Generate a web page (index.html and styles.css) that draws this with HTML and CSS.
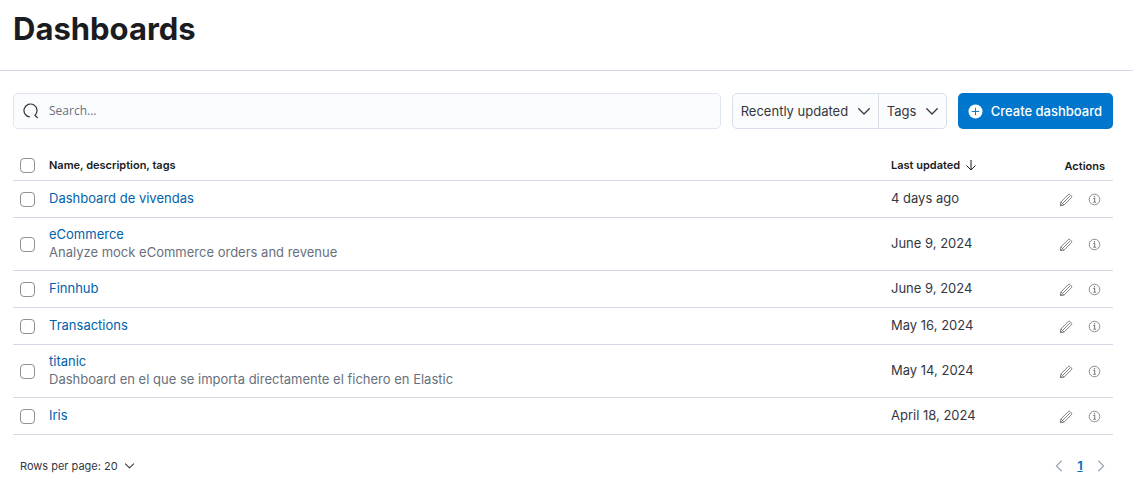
FILE: index.html
```html
<!DOCTYPE html>
<html lang="en">
<head>
<meta charset="utf-8">
<meta name="viewport" content="width=device-width, initial-scale=1">
<title>Dashboards</title>
<link rel="stylesheet" href="styles.css">
</head>
<body>
<svg class="sprite" aria-hidden="true">
  <symbol id="chevron" viewBox="0 0 16 16"><path d="M2 5.500 8 11.500l6-6" fill="none" stroke="currentColor" stroke-width="1.500" stroke-linecap="round" stroke-linejoin="round"/></symbol>
  <symbol id="pencil" viewBox="0 0 16 16"><path d="M1.600 14.400 2.200 10.200 10.600 1.800a1.400 1.400 0 0 1 2 0l1.600 1.600a1.400 1.400 0 0 1 0 2L5.800 13.800zM2.200 10.200l3.600 3.600M4 12l8.800-8.800" fill="none" stroke="currentColor" stroke-width="1.100"/><path d="M1.200 14.800 1.700 11.600l2.700 2.700z" fill="currentColor"/></symbol>
  <symbol id="info" viewBox="0 0 16 16"><circle cx="8" cy="8" r="6.500" fill="none" stroke="currentColor" stroke-width="1.100"/><path d="M6.500 6.800h1.700v4.500M6.500 11.400h3.300" fill="none" stroke="currentColor" stroke-width="1.300"/><circle cx="8" cy="4.600" r="1" fill="currentColor"/></symbol>
</svg>

<header class="page-header">
  <h1 class="page-title">Dashboards</h1>
</header>

<main class="content">
  <div class="toolbar">
    <label class="search">
      <svg class="search-icon" viewBox="0 0 16 16" aria-hidden="true"><path d="M7 14A6.500 6.500 0 1 1 12 12.200L14.700 15" fill="none" stroke="currentColor" stroke-width="1.200"/></svg>
      <input class="search-input" type="search" placeholder="Search..." aria-label="Search dashboards">
    </label>
    <div class="filters">
      <div class="picker">
        <select class="picker-select" aria-label="Sort by"><option>Recently updated</option></select>
        <svg class="picker-icon" aria-hidden="true"><use href="#chevron"/></svg>
      </div>
      <div class="picker">
        <select class="picker-select" aria-label="Filter by tags"><option>Tags</option></select>
        <svg class="picker-icon" aria-hidden="true"><use href="#chevron"/></svg>
      </div>
    </div>
    <button class="create" type="button">
      <svg class="create-icon" viewBox="0 0 16 16" aria-hidden="true"><circle cx="8" cy="8" r="7.500" fill="currentColor"/><path class="create-plus" d="M8 4v8M4 8h8"/></svg>
      Create dashboard
    </button>
  </div>

  <table class="table">
    <thead>
      <tr>
        <th class="cell-check"><input class="check" type="checkbox" aria-label="Select all rows"></th>
        <th class="cell-name" scope="col">Name, description, tags</th>
        <th class="cell-date" scope="col" aria-sort="descending"><button class="sort" type="button">Last updated <svg class="sort-icon" viewBox="0 0 12 12" aria-hidden="true"><path d="M6 1v10M1.500 6.500 6 11l4.500-4.500" fill="none" stroke="currentColor"/></svg></button></th>
        <th class="cell-actions" scope="col">Actions</th>
      </tr>
    </thead>
    <tbody>
      <tr>
        <td class="cell-check"><input class="check" type="checkbox" aria-label="Select Dashboard de vivendas"></td>
        <td class="cell-name"><a class="link" href="#vivendas">Dashboard de vivendas</a></td>
        <td class="cell-date">4 days ago</td>
        <td class="cell-actions"><div class="actions"><button class="action" type="button" aria-label="Edit"><svg class="action-icon"><use href="#pencil"/></svg></button><button class="action" type="button" aria-label="View details"><svg class="action-icon info"><use href="#info"/></svg></button></div></td>
      </tr>
      <tr>
        <td class="cell-check"><input class="check" type="checkbox" aria-label="Select eCommerce"></td>
        <td class="cell-name"><a class="link" href="#ecommerce">eCommerce</a><p class="description">Analyze mock eCommerce orders and revenue</p></td>
        <td class="cell-date">June 9, 2024</td>
        <td class="cell-actions"><div class="actions"><button class="action" type="button" aria-label="Edit"><svg class="action-icon"><use href="#pencil"/></svg></button><button class="action" type="button" aria-label="View details"><svg class="action-icon info"><use href="#info"/></svg></button></div></td>
      </tr>
      <tr>
        <td class="cell-check"><input class="check" type="checkbox" aria-label="Select Finnhub"></td>
        <td class="cell-name"><a class="link" href="#finnhub">Finnhub</a></td>
        <td class="cell-date">June 9, 2024</td>
        <td class="cell-actions"><div class="actions"><button class="action" type="button" aria-label="Edit"><svg class="action-icon"><use href="#pencil"/></svg></button><button class="action" type="button" aria-label="View details"><svg class="action-icon info"><use href="#info"/></svg></button></div></td>
      </tr>
      <tr>
        <td class="cell-check"><input class="check" type="checkbox" aria-label="Select Transactions"></td>
        <td class="cell-name"><a class="link" href="#transactions">Transactions</a></td>
        <td class="cell-date">May 16, 2024</td>
        <td class="cell-actions"><div class="actions"><button class="action" type="button" aria-label="Edit"><svg class="action-icon"><use href="#pencil"/></svg></button><button class="action" type="button" aria-label="View details"><svg class="action-icon info"><use href="#info"/></svg></button></div></td>
      </tr>
      <tr>
        <td class="cell-check"><input class="check" type="checkbox" aria-label="Select titanic"></td>
        <td class="cell-name"><a class="link" href="#titanic">titanic</a><p class="description">Dashboard en el que se importa directamente el fichero en Elastic</p></td>
        <td class="cell-date">May 14, 2024</td>
        <td class="cell-actions"><div class="actions"><button class="action" type="button" aria-label="Edit"><svg class="action-icon"><use href="#pencil"/></svg></button><button class="action" type="button" aria-label="View details"><svg class="action-icon info"><use href="#info"/></svg></button></div></td>
      </tr>
      <tr>
        <td class="cell-check"><input class="check" type="checkbox" aria-label="Select Iris"></td>
        <td class="cell-name"><a class="link" href="#iris">Iris</a></td>
        <td class="cell-date">April 18, 2024</td>
        <td class="cell-actions"><div class="actions"><button class="action" type="button" aria-label="Edit"><svg class="action-icon"><use href="#pencil"/></svg></button><button class="action" type="button" aria-label="View details"><svg class="action-icon info"><use href="#info"/></svg></button></div></td>
      </tr>
    </tbody>
  </table>

  <footer class="pager">
    <div class="picker rows">
      <select class="picker-select rows-select" aria-label="Rows per page"><option>Rows per page: 20</option></select>
      <svg class="picker-icon rows-icon" aria-hidden="true"><use href="#chevron"/></svg>
    </div>
    <nav class="pages" aria-label="Pagination">
      <button class="page-step" type="button" aria-label="Previous page" disabled><svg class="step-icon" viewBox="0 0 16 16"><path d="M11 2 5 8l6 6"/></svg></button>
      <a class="page-link" href="#page-1" aria-current="page">1</a>
      <button class="page-step" type="button" aria-label="Next page" disabled><svg class="step-icon" viewBox="0 0 16 16"><path d="m5 2 6 6-6 6"/></svg></button>
    </nav>
  </footer>
</main>
</body>
</html>
```
FILE: styles.css
```css
* { box-sizing: border-box; }

body {
  margin: 0;
  background: #fff;
  color: #343741;
  font: 13px/18px Inter, "Liberation Sans", sans-serif;
}

button, select, input { font: inherit; color: inherit; }

button { border: 0; padding: 0; background: none; cursor: pointer; }

.sprite { display: none; }

.page-header {
  padding: 10px 13px 22px;
  border-bottom: 1px solid #d3dae6;
}

.page-title {
  margin: 0;
  color: #1a1c21;
  font-size: 31px;
  font-weight: 700;
  line-height: 38px;
}

.content { padding: 22px 20px 22px 13px; }

.toolbar { display: flex; gap: 11px; margin-bottom: 21px; }

.search {
  display: flex;
  flex: 1;
  align-items: center;
  gap: 10px;
  height: 36px;
  padding: 0 9px;
  border: 1px solid #e0e5ee;
  border-radius: 5px;
  background: #fbfcfd;
}

.search-icon { width: 16px; height: 16px; }

.search-input {
  flex: 1;
  min-width: 0;
  padding: 0;
  border: 0;
  outline: 0;
  background: none;
  font-family: "Open Sans", sans-serif;
  font-size: 12px;
}

.search-input::placeholder { color: #69707d; opacity: 1; }

.filters {
  display: flex;
  border: 1px solid #d9dfe9;
  border-radius: 5px;
  background: #fbfcfd;
}

.picker { display: grid; align-items: center; }
.picker + .picker { border-left: 1px solid #d9dfe9; }

.picker-select {
  grid-area: 1 / 1;
  height: 34px;
  padding: 0 29px 1px 8px;
  border: 0;
  background: none;
  appearance: none;
}

.picker-icon {
  grid-area: 1 / 1;
  justify-self: end;
  width: 14px;
  height: 14px;
  margin-right: 7px;
  pointer-events: none;
}

.create {
  display: flex;
  align-items: center;
  gap: 8px;
  height: 36px;
  padding: 0 11px 0 10px;
  border-radius: 5px;
  background: #0077cc;
  color: #fff;
  font-weight: 500;
}

.create-icon { width: 15px; height: 15px; }
.create-plus { stroke: #0077cc; stroke-width: 1; }

.table { width: 100%; border-collapse: collapse; table-layout: fixed; }

.table th {
  height: 30px;
  padding: 0 8px;
  border-bottom: 1px solid #d3dae6;
  color: #1a1c21;
  font-size: 11px;
  font-weight: 600;
  text-align: left;
}

.table td {
  height: 37px;
  padding: 7px 8px 9px;
  border-bottom: 1px solid #d3dae6;
}

.table .cell-check { width: 28px; padding: 2px 0 0 7px; }
.table .cell-date { width: 164px; }
.table .cell-actions { width: 66px; padding: 2px 8px 0; text-align: right; }

.check {
  display: block;
  width: 15px;
  height: 15px;
  margin: 0;
  border: 1px solid #8e9096;
  border-radius: 4px;
  background: #fff;
  appearance: none;
}

.sort { display: flex; align-items: center; gap: 5px; font-weight: 600; }
.sort-icon { width: 12px; height: 12px; }

.link { display: block; color: #0062ad; text-decoration: none; }
.description { margin: 0; color: #69707d; }

.actions { display: flex; justify-content: flex-end; gap: 7px; }

.action {
  display: grid;
  place-items: center;
  width: 22px;
  height: 22px;
  color: #7b7d82;
}

.action-icon { width: 14px; height: 14px; }
.info { width: 13px; height: 13px; }

.pager {
  display: flex;
  align-items: center;
  justify-content: space-between;
  padding: 20px 4px 0 0;
}

.rows-select { height: 22px; padding: 0 24px 0 7px; font-size: 11px; }
.rows-icon { width: 11px; height: 11px; }

.pages { display: flex; align-items: center; gap: 5px; }
.page-step { display: grid; place-items: center; width: 16px; height: 22px; color: #98a2b3; }
.step-icon { width: 14px; height: 14px; fill: none; stroke: currentColor; stroke-width: 1.300; }

.page-link {
  width: 16px;
  color: #0071c2;
  font-size: 12px;
  font-weight: 700;
  text-align: center;
}
```
